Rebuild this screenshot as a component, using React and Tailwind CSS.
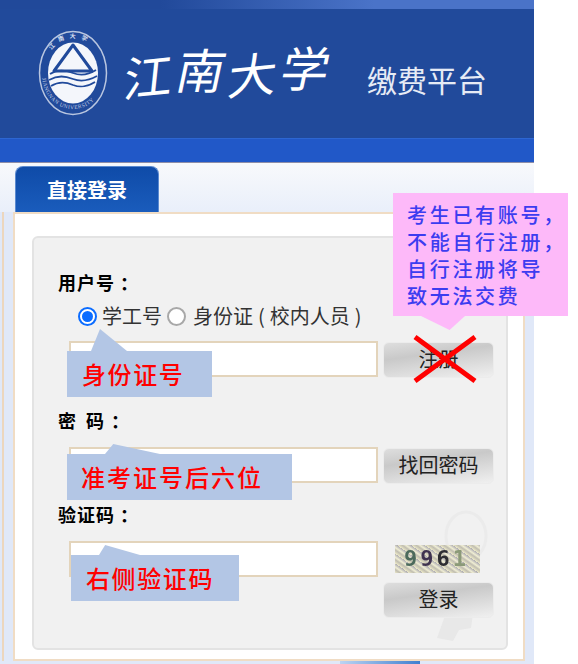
const cjk = "font-['Noto_Sans_CJK_SC','Noto_Sans',sans-serif]"

function Logo() {
  return (
    <svg width="70" height="86" viewBox="0 0 70 86" className="shrink-0">
      <ellipse cx="35" cy="43" rx="33.5" ry="41.5" fill="none" stroke="#b9c6e0" strokeWidth="1.5" />
      <ellipse cx="35" cy="43" rx="25" ry="30.5" fill="#f4f6fb" />
      <path d="M35 15 L54 41 L16 41 Z" fill="#f4f6fb" stroke="#214a9b" strokeWidth="3" strokeLinejoin="round" />
      <path d="M12 44 C20 39 27 40 35 43 C43 46 50 45 58 40" fill="none" stroke="#214a9b" strokeWidth="1.8" />
      <path d="M11 50 C20 45 27 46 35 49 C43 52 50 51 59 46" fill="none" stroke="#214a9b" strokeWidth="1.8" />
      <path d="M13 56 C21 51 28 52 35 55 C43 58 49 57 57 52" fill="none" stroke="#214a9b" strokeWidth="1.8" />
      <path id="jn-top" d="M12 24 C20 3 50 3 58 24" fill="none" />
      <text fontSize="6" fill="#d5ddee" fontWeight="700" letterSpacing="5">
        <textPath href="#jn-top" startOffset="4">江南大学</textPath>
      </text>
      <path id="jn-arc" d="M4 46 C7 90 63 90 66 46" fill="none" />
      <text fontSize="5.5" fill="#c4d0e6" fontFamily="Liberation Serif, serif" letterSpacing="0.5">
        <textPath href="#jn-arc" startOffset="2">JIANGNAN UNIVERSITY</textPath>
      </text>
    </svg>
  )
}

// 表单右侧的灰色按钮
function GrayButton({ children }) {
  return (
    <button className="w-[111px] h-[36px] shrink-0 rounded-md border border-[#ececec] bg-[linear-gradient(172deg,#dedede_0%,#c9c9c9_35%,#f0f0f0_100%)] text-[20px] leading-[30px] pb-[2px] text-[#222]">
      {children}
    </button>
  )
}

function TextInput() {
  return <input type="text" className="w-[309px] h-[36px] shrink-0 bg-white border-2 border-[#e3d4bb] outline-none" />
}

function Radio({ checked }) {
  return checked ? (
    <span className="w-[19px] h-[19px] rounded-full border-2 border-[#0b6cff] bg-white flex items-center justify-center shrink-0">
      <span className="w-[11px] h-[11px] rounded-full bg-[#0b6cff]" />
    </span>
  ) : (
    <span className="w-[19px] h-[19px] rounded-full border-2 border-[#a8a8a8] bg-white shrink-0" />
  )
}

// 蓝底红字的标注气泡
function Note({ className, tip, children }) {
  return (
    <div className={`absolute h-[46px] bg-[#b3c6e5] text-[#ff0000] text-[24px] font-medium leading-[46px] ${className}`}>
      <span className={`absolute bottom-full bg-[#b3c6e5] ${tip}`} />
      {children}
    </div>
  )
}

function Captcha() {
  return (
    <div className="w-[85px] h-[28px] flex items-center pl-[9px] gap-[3px] bg-[#d3d0b4] bg-[repeating-linear-gradient(35deg,#ece9c8_0px,#c0bdb0_3px,#f0eed4_5px,#aeacb2_8px)] font-['DejaVu_Sans_Mono',monospace] font-bold text-[22px] leading-none blur-[0.4px]">
      <span className="text-[#4c6a5c]">9</span>
      <span className="text-[#3f3350]">9</span>
      <span className="text-[#2e2e32]">6</span>
      <span className="text-[#8b9a78]">1</span>
    </div>
  )
}

export default function App() {
  return (
    <div className={`relative w-[578px] h-[664px] overflow-hidden bg-white ${cjk}`}>
      <div className="w-[534px] h-full flex flex-col">
        {/* 顶部 */}
        <div className="h-[9px] bg-[linear-gradient(to_right,#21499a_0%,#21499a_30%,#4a73c8_70%,#4a73c8_100%)]" />
        <div className="h-[129px] bg-[#214a9b] flex items-start pl-[38px] pt-[21px]">
          <Logo />
          <div className="ml-[17px] mt-[-6px] flex gap-[4px] text-white text-[48px] leading-[96px] font-normal -skew-x-12 w-[215px]">
            <span className="-rotate-6 translate-y-[2px]">江</span>
            <span className="translate-y-[-4px]">南</span>
            <span className="-rotate-6">大</span>
            <span className="translate-y-[-6px]">学</span>
          </div>
          <div className="ml-[27px] mt-[29px] text-[#e6ebf5] text-[30px] leading-[40px] font-normal">缴费平台</div>
        </div>
        <div className="h-[25px] bg-[#2158c8] border-t border-[#2d66d2] border-b-[#8e8ea8] border-b" />

        {/* 标签栏 */}
        <div className="h-[49px] pl-[15px] pt-[3px] bg-[linear-gradient(to_bottom,#f8f9fc,#e9effa)]">
          <div className="w-[144px] h-[46px] rounded-t-lg bg-[linear-gradient(to_bottom,#0f4ba8,#1a5cbc)] border border-[#5b8ad0] border-b-0 flex items-center justify-center text-white text-[20px] font-bold">
            直接登录
          </div>
        </div>

        {/* 主体 */}
        <div className="flex-1 bg-[#e0e8f8] pl-[2px] flex">
          <div className="w-[2px] h-[449px] bg-[#ecd6bd]" />
          <div className="w-[9px]" />
          <div className="w-[512px] h-[449px] bg-white border-2 border-[#f0dcc4] pl-[17px] pt-[22px] pr-[15px]">
            <div className="relative w-[476px] h-[414px] bg-[#f1f1f1] border-2 border-[#e3e3e3] rounded-md pl-[24px] pt-[31px]">
              {/* 钥匙水印 */}
              <svg width="60" height="132" viewBox="0 0 60 132" fill="none" className="absolute left-[401px] top-[272px]">
                <ellipse cx="31" cy="26" rx="20" ry="24" stroke="#ebebeb" strokeWidth="3" />
                <path d="M12 100 L2 128 L18 131 L24 120 L36 118 L38 104 Z" fill="#e8e8e8" />
              </svg>

              <div className="relative font-bold text-[18px] leading-[26px] text-black tracking-[1px]">用户号 ：</div>
              <div className="relative mt-[8px] ml-[20px] h-[26px] flex items-center text-[#333] text-[20px] leading-[26px] whitespace-nowrap [word-spacing:0.5px]">
                <Radio checked />
                <span className="ml-[5px]">学工号</span>
                <span className="ml-[5px] flex"><Radio /></span>
                <span className="ml-[7px]">身份证 ( 校内人员 )</span>
              </div>
              <div className="relative mt-[12px] ml-[11px] flex items-start gap-[5px]">
                <TextInput />
                <div className="mt-[1px]"><GrayButton>注册</GrayButton></div>
              </div>
              <div className="relative mt-[29px] font-bold text-[18px] leading-[26px] text-black">
                密<span className="ml-[10px]">码</span><span className="ml-[3px]"> ：</span>
              </div>
              <div className="relative mt-[14px] ml-[11px] flex items-start gap-[5px]">
                <TextInput />
                <div className="mt-[1px]"><GrayButton>找回密码</GrayButton></div>
              </div>
              <div className="relative mt-[17px] font-bold text-[18px] leading-[26px] text-black tracking-[1px]">验证码 ：</div>
              <div className="relative mt-[14px] ml-[11px] flex items-start gap-[5px]">
                <TextInput />
                <div className="flex flex-col">
                  <div className="ml-[12px] mt-[4px]"><Captcha /></div>
                  <div className="mt-[9px]"><GrayButton>登录</GrayButton></div>
                </div>
              </div>
            </div>
          </div>
        </div>
      </div>

      {/* 页面底部露出的蓝色块 */}
      <div className="absolute left-[340px] top-[661px] w-[80px] h-[3px] bg-[linear-gradient(to_right,#bcd4f2,#3f7fd0)]" />

      {/* 标注 */}
      <Note className="left-[67px] top-[351px] w-[145px] pl-[15px] tracking-[1.6px]" tip="left-[24px] w-[36px] h-[22px] [clip-path:polygon(0_100%,25%_0,100%_100%)]">
        身份证号
      </Note>
      <Note className="left-[67px] top-[454px] w-[225px] pl-[14px] tracking-[2px]" tip="left-[38px] w-[55px] h-[10px] [clip-path:polygon(0_100%,15%_0,100%_100%)]">
        准考证号后六位
      </Note>
      <Note className="left-[71px] top-[555px] w-[168px] pl-[15px] tracking-[1.6px]" tip="left-[28px] w-[41px] h-[10px] [clip-path:polygon(0_100%,15%_0,100%_100%)]">
        右侧验证码
      </Note>

      {/* 粉色提示 */}
      <div className="absolute left-[393px] top-[193px] w-[175px] h-[123px] bg-[#fdb9f9] pl-[14px] pt-[8px] text-[20px] font-medium leading-[27px] tracking-[2.7px] text-[#3c3cf0] whitespace-nowrap">
        考生已有账号，<br />不能自行注册，<br />自行注册将导<br />致无法交费
        <span className="absolute left-[28px] top-full w-[44px] h-[14px] bg-[#fdb9f9] [clip-path:polygon(0_0,100%_0,65%_100%)]" />
      </div>

      {/* 注册按钮上的红叉 */}
      <svg width="66" height="50" viewBox="0 0 66 50" className="absolute left-[412px] top-[334px]">
        <path d="M3 3 L63 47 M63 3 L3 47" stroke="#ff0000" strokeWidth="5" />
      </svg>
    </div>
  )
}
